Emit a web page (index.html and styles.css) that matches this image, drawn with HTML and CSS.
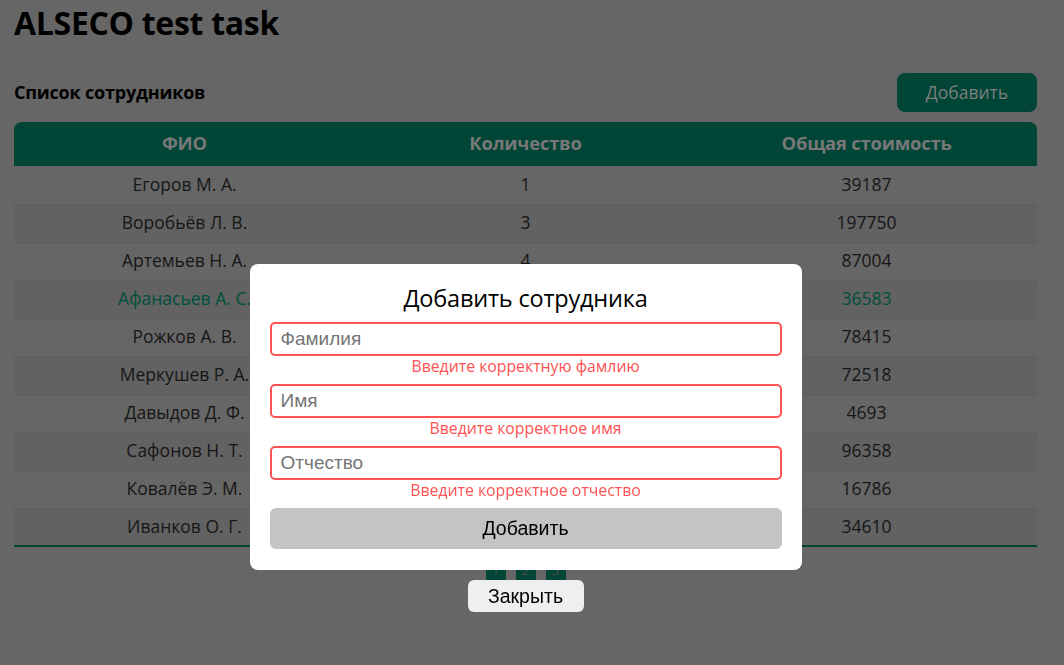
FILE: index.html
```html
<!DOCTYPE html>
<html lang="ru">
<head>
<meta charset="utf-8">
<link rel="stylesheet" href="styles.css">
</head>
<body>
<div class="page">
  <h1 class="title">ALSECO test task</h1>
  <div class="toolbar">
    <h2 class="subtitle">Список сотрудников</h2>
    <button class="btn-add">Добавить</button>
  </div>
  <table class="table">
    <thead>
      <tr><th>ФИО</th><th>Количество</th><th>Общая стоимость</th></tr>
    </thead>
    <tbody>
      <tr><td>Егоров М. А.</td><td>1</td><td>39187</td></tr>
      <tr><td>Воробьёв Л. В.</td><td>3</td><td>197750</td></tr>
      <tr><td>Артемьев Н. А.</td><td>4</td><td>87004</td></tr>
      <tr class="active"><td>Афанасьев А. С.</td><td>2</td><td>36583</td></tr>
      <tr><td>Рожков А. В.</td><td>3</td><td>78415</td></tr>
      <tr><td>Меркушев Р. А.</td><td>2</td><td>72518</td></tr>
      <tr><td>Давыдов Д. Ф.</td><td>1</td><td>4693</td></tr>
      <tr><td>Сафонов Н. Т.</td><td>3</td><td>96358</td></tr>
      <tr><td>Ковалёв Э. М.</td><td>1</td><td>16786</td></tr>
      <tr><td>Иванков О. Г.</td><td>2</td><td>34610</td></tr>
    </tbody>
  </table>
  <div class="pager">
    <span class="page-btn">1</span>
    <span class="page-btn">2</span>
    <span class="page-btn">3</span>
  </div>
</div>
<div class="overlay">
  <div class="overlay-inner">
    <div class="modal">
      <div class="modal-title">Добавить сотрудника</div>
      <input class="field" placeholder="Фамилия">
      <div class="error">Введите корректную фамлию</div>
      <input class="field" placeholder="Имя">
      <div class="error">Введите корректное имя</div>
      <input class="field" placeholder="Отчество">
      <div class="error">Введите корректное отчество</div>
      <button class="btn-submit">Добавить</button>
    </div>
    <button class="btn-close">Закрыть</button>
  </div>
</div>
</body>
</html>
```

FILE: styles.css
```css
* { box-sizing: border-box; }
html, body { margin: 0; padding: 0; }
body {
  background: #666666;
  font-family: "Open Sans", "Noto Sans", sans-serif;
  color: #111;
  width: 1064px;
  height: 665px;
  overflow: hidden;
}
.page {
  width: 1023px;
  margin-left: 14px;
}
.title {
  margin: 0;
  padding-top: 3px;
  font-size: 32px;
  font-weight: 700;
  line-height: 40px;
  color: #000;
  letter-spacing: -0.3px;
}
.toolbar {
  display: flex;
  justify-content: space-between;
  align-items: center;
  margin-top: 30px;
  height: 39px;
}
.subtitle {
  margin: 0 0 2px;
  font-size: 18px;
  font-weight: 700;
  color: #000;
  letter-spacing: -0.2px;
}
.btn-add {
  width: 140px;
  height: 39px;
  border: none;
  border-radius: 8px;
  background: #004536;
  color: #7f7f7f;
  font-family: inherit;
  font-size: 17.5px;
  padding: 0 0 2px;
}
.table {
  width: 100%;
  margin-top: 10px;
  border-collapse: collapse;
  table-layout: fixed;
  border-bottom: 2px solid #004536;
}
.table th {
  height: 44px;
  background: #004536;
  color: #787878;
  font-size: 18.4px;
  font-weight: 700;
  text-align: center;
  letter-spacing: -0.2px;
  padding: 0 0 3px;
}
.table th:first-child { border-top-left-radius: 8px; }
.table th:last-child { border-top-right-radius: 8px; }
.table td {
  height: 38px;
  text-align: center;
  font-size: 17.5px;
  color: #161616;
  border-top: 1px solid #5d5d5d;
  padding: 0 0 2px;
}
.table tbody tr:first-child td { border-top: none; }
.table tbody tr:nth-child(even) td { background: #626262; }
.table tr.active td { color: #00503c; }
.pager {
  display: flex;
  justify-content: center;
  gap: 10px;
  margin-top: 13px;
}
.page-btn {
  width: 20px;
  height: 20px;
  background: #004536;
  color: #4d4d4d;
  font-size: 14px;
  line-height: 20px;
  text-align: center;
}
.overlay {
  position: fixed;
  inset: 0;
}
.overlay-inner {
  width: 1023px;
  margin-left: 14px;
  padding-top: 264px;
  display: flex;
  flex-direction: column;
  align-items: center;
}
.modal {
  width: 552px;
  background: #fff;
  border-radius: 8px;
  padding: 20px 20px 21px;
  display: flex;
  flex-direction: column;
}
.modal-title {
  text-align: center;
  font-size: 23.5px;
  line-height: 28px;
  color: #000;
  margin-bottom: 10px;
  letter-spacing: -0.2px;
}
.field {
  height: 34px;
  width: 100%;
  border: 2px solid #ff5252;
  border-radius: 5px;
  padding: 0 9px;
  font-family: "Liberation Sans", Arial, sans-serif;
  font-size: 19px;
  outline: none;
}
.field::placeholder { color: #757575; }
.error {
  text-align: center;
  color: #ff5252;
  font-size: 15.8px;
  line-height: 18px;
  margin: 1px 0 9px;
}
.btn-submit {
  height: 41px;
  border: none;
  border-radius: 6px;
  background: #c4c4c4;
  color: #000;
  font-family: "Liberation Sans", Arial, sans-serif;
  font-size: 19.5px;
}
.btn-close {
  margin-top: 10px;
  width: 116px;
  height: 32px;
  border: none;
  border-radius: 6px;
  background: #efefef;
  color: #000;
  font-family: "Liberation Sans", Arial, sans-serif;
  font-size: 19.5px;
}
```
